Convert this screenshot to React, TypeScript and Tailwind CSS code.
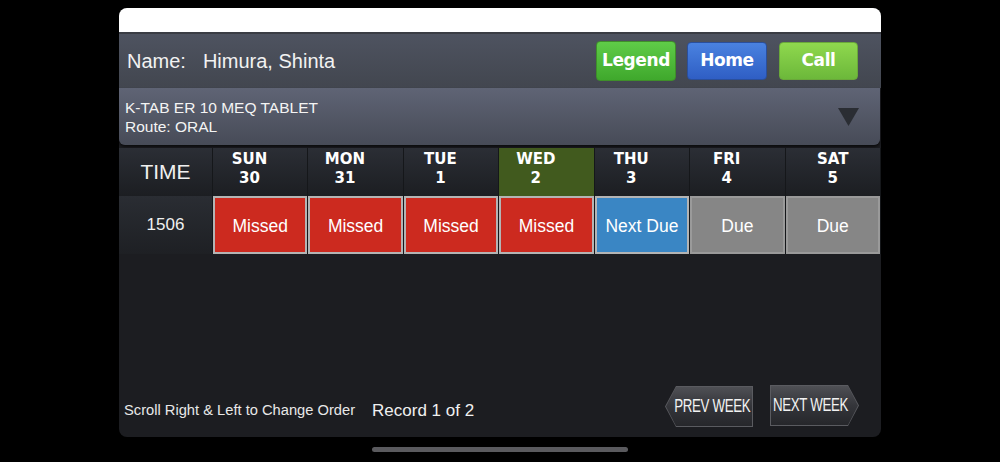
import React from "react";

const days = [
  { d: "SUN", n: "30", status: "Missed" },
  { d: "MON", n: "31", status: "Missed" },
  { d: "TUE", n: "1", status: "Missed" },
  { d: "WED", n: "2", status: "Missed", today: true },
  { d: "THU", n: "3", status: "Next Due" },
  { d: "FRI", n: "4", status: "Due" },
  { d: "SAT", n: "5", status: "Due" },
];

const statusClass: Record<string, string> = {
  Missed: "bg-[#cc2a1f] border-[#b4b4b4]",
  "Next Due": "bg-[#3a86c4] border-[#b4b4b4]",
  Due: "bg-[#868686] border-[#9a9a9a]",
};

export default function App() {
  return (
    <div className="w-full h-[462px] bg-black flex flex-col items-center font-['Liberation_Sans',Arial,sans-serif] text-white">
      <div className="mt-2 w-[762px] h-[429px] rounded-lg overflow-hidden bg-[#1c1d21] flex flex-col">
        {/* top strip */}
        <div className="h-[26px] bg-white border-b-2 border-[#3a3d44]" />

        {/* name header */}
        <div className="h-[54px] flex items-center bg-gradient-to-b from-[#4e5360] to-[#42464f] pl-2 pr-[23px]">
          <div className="text-[20px] text-[#f2f2f2] flex-1">
            <span>Name:</span>
            <span className="ml-[17px]">Himura, Shinta</span>
          </div>
          <button className="w-[80px] h-[40px] rounded-[4px] border border-[#3f8f2a] bg-gradient-to-b from-[#5fcc48] to-[#3fa82c] text-[17px] font-bold text-white font-['DejaVu_Sans',sans-serif] tracking-tight">
            Legend
          </button>
          <button className="ml-[11px] w-[80px] h-[38px] rounded-[4px] border border-[#2a4f9c] bg-gradient-to-b from-[#4a82e0] to-[#2f5ec4] text-[17px] font-bold text-white font-['DejaVu_Sans',sans-serif] tracking-tight">
            Home
          </button>
          <button className="ml-[12px] w-[79px] h-[38px] rounded-[4px] border border-[#6aa83a] bg-gradient-to-b from-[#8fd84e] to-[#6cb83a] text-[17px] font-bold text-white font-['DejaVu_Sans',sans-serif] tracking-tight">
            Call
          </button>
        </div>

        {/* medication */}
        <div className="h-[57px] flex items-center bg-gradient-to-b from-[#5f6475] to-[#474b57] rounded-b-md mr-[1px] pl-[6px] pr-[21px] shadow-[0_2px_3px_rgba(0,0,0,0.6)]">
          <div className="flex-1 text-[15.5px] leading-[19px] text-[#f4f4f4]">
            <div>K-TAB ER 10 MEQ TABLET</div>
            <div>Route: ORAL</div>
          </div>
          <svg width="21" height="18" viewBox="0 0 21 18">
            <polygon points="0,0 21,0 10.5,18" fill="#2a2d33" />
          </svg>
        </div>

        {/* table */}
        <div className="mt-[3px] flex flex-col">
          <div className="flex h-[48px] bg-[#15171a] gap-[1px] pr-[1px]">
            <div className="w-[93px] flex items-center justify-center text-[21px] text-[#f0f0f0] bg-gradient-to-b from-[#2b2e35] to-[#1c1e22]">
              TIME
            </div>
            {days.map((x) => (
              <div
                key={x.d}
                className={`flex-1 flex ${x.d === "SAT" ? "justify-center" : ""} ${
                  x.today ? "bg-[#415a1e]" : "bg-gradient-to-b from-[#2b2e35] to-[#1c1e22]"
                }`}
              >
                <div className={`${x.d === "SAT" ? "w-auto" : "w-[73px]"} pt-[2px] flex flex-col items-center text-[15px] leading-[19px] font-bold font-['DejaVu_Sans',sans-serif] text-white`}>
                  <span>{x.d}</span>
                  <span>{x.n}</span>
                </div>
              </div>
            ))}
          </div>

          <div className="flex h-[58px] bg-[#15171a] gap-[1px] pr-[1px]">
            <div className="w-[93px] flex items-center justify-center text-[17px] text-[#f0f0f0] bg-gradient-to-b from-[#2a2d33] to-[#1e2024]">
              1506
            </div>
            {days.map((x) => (
              <div
                key={x.d}
                className={`flex-1 flex items-center justify-center pt-[3px] text-[17.5px] text-white border-2 ${statusClass[x.status]}`}
              >
                {x.status}
              </div>
            ))}
          </div>
        </div>

        {/* footer */}
        <div className="flex-1 flex items-end pb-[9px] pl-[5px] pr-[22px]">
          <div className="flex items-center flex-1 pb-[5px]">
            <span className="text-[14.7px] text-[#e8e8e8]">Scroll Right &amp; Left to Change Order</span>
            <span className="ml-[17px] text-[17px] text-[#f0f0f0]">Record 1 of 2</span>
          </div>
          <div className="flex items-end gap-[17px]">
            <button className="w-[88px] h-[41px] mb-[1px] [clip-path:polygon(11px_0,100%_0,100%_100%,11px_100%,0_50%)] bg-[#5a5b60] p-[1px]">
              <div className="w-full h-full [clip-path:polygon(10px_0,100%_0,100%_100%,10px_100%,0_50%)] bg-gradient-to-b from-[#4f5055] via-[#34353a] to-[#26272b] flex items-center justify-center pl-[7px] text-[19px] text-[#f2f2f2] whitespace-nowrap">
                <span className="inline-block scale-x-[0.7] tracking-[-0.5px]">PREV WEEK</span>
              </div>
            </button>
            <button className="w-[89px] h-[41px] mb-[2px] [clip-path:polygon(0_0,calc(100%-11px)_0,100%_50%,calc(100%-11px)_100%,0_100%)] bg-[#5a5b60] p-[1px]">
              <div className="w-full h-full [clip-path:polygon(0_0,calc(100%-10px)_0,100%_50%,calc(100%-10px)_100%,0_100%)] bg-gradient-to-b from-[#4f5055] via-[#34353a] to-[#26272b] flex items-center justify-center pr-[7px] text-[19px] text-[#f2f2f2] whitespace-nowrap">
                <span className="inline-block scale-x-[0.7] tracking-[-0.5px]">NEXT WEEK</span>
              </div>
            </button>
          </div>
        </div>
      </div>
      <div className="mt-[10px] w-[256px] h-[5px] rounded-full bg-[#5a5a5e]" />
    </div>
  );
}
